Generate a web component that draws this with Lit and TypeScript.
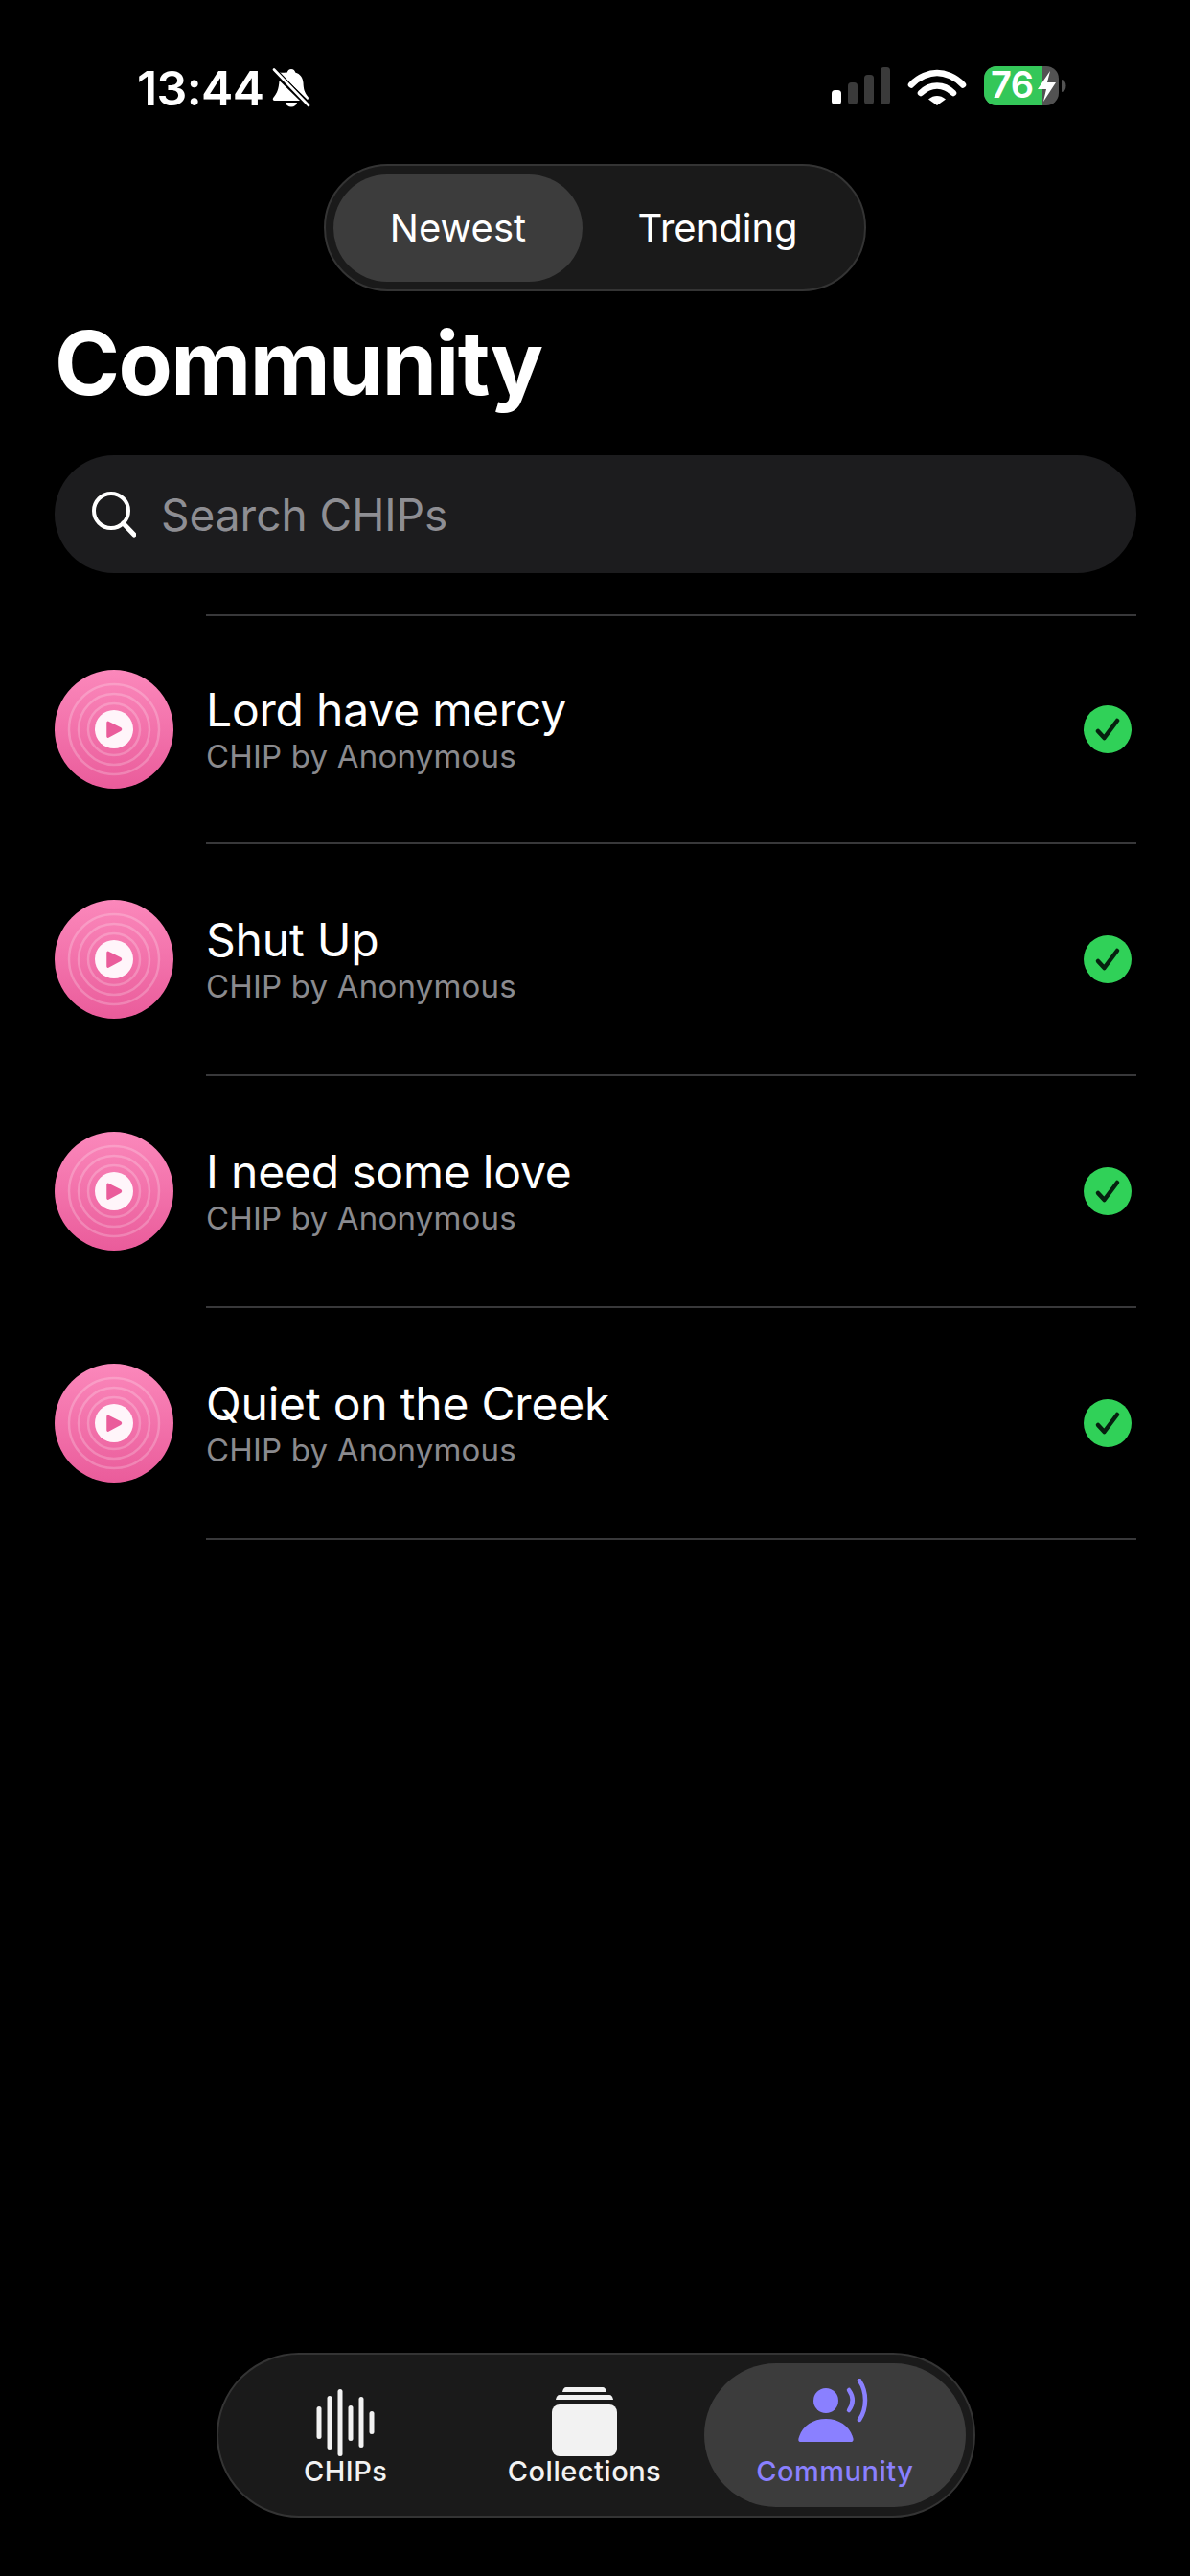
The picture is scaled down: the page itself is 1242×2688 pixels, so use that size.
import { LitElement, html, css, svg } from "lit";
import { customElement } from "lit/decorators.js";

const rows = ["Lord have mercy", "Shut Up", "I need some love", "Quiet on the Creek"];

@customElement("app-root")
export class AppRoot extends LitElement {
  static styles = css`
    :host { display: block; width: 1242px; height: 2688px; background: #000; color: #fff; font-family: Inter, "Noto Sans", sans-serif; overflow: hidden; }
    * { box-sizing: border-box; }
    .page { display: flex; flex-direction: column; height: 2688px; }
    .status { height: 171px; flex: none; display: flex; justify-content: space-between; align-items: flex-start; padding: 62px 85px 0 143px; }
    .status-left { display: flex; align-items: center; gap: 8px; }
    .time { font-size: 50px; line-height: 60px; font-weight: 600; letter-spacing: -0.6px; }
    .status-right { display: flex; align-items: center; padding-top: 7px; }
    .seg { align-self: center; flex: none; width: 566px; height: 133px; border-radius: 67px; background: #1a1a1a; border: 2px solid #343434; display: flex; align-items: center; padding: 0 8px; }
    .seg div { height: 112px; border-radius: 56px; display: flex; align-items: center; justify-content: center; font-size: 40px; }
    .seg .on { width: 260px; background: #3c3c3c; }
    .seg .off { width: 282px; }
    h1 { margin: 20px 0 0 57px; font-size: 92px; line-height: 110px; font-weight: 700; letter-spacing: -1.6px; }
    .search { margin: 41px 56px 0 57px; height: 123px; flex: none; border-radius: 62px; background: #1c1c1e; display: flex; align-items: center; padding-left: 39px; gap: 26px; font-size: 46px; color: #8e8e93; }
    .list { margin: 43px 56px 0 57px; display: flex; flex-direction: column; }
    .top-rule { height: 2px; margin-left: 158px; background: #38383a; }
    .row { height: 242px; display: flex; align-items: center; position: relative; padding-bottom: 2px; }
    .row.first { height: 238px; }
    .row::after { content: ""; position: absolute; left: 158px; right: 0; bottom: 0; height: 2px; background: #38383a; }
    .row .disc { flex: none; width: 124px; height: 124px; }
    .text { margin-left: 34px; flex: 1; display: flex; flex-direction: column; }
    .title { font-size: 48px; line-height: 56px; letter-spacing: -0.2px; }
    .sub { font-size: 33px; line-height: 40px; color: #8a8a8e; letter-spacing: 0.2px; }
    .check { flex: none; margin-right: 5px; width: 50px; height: 50px; }
    .tabs { margin: auto 0 61px 226px; flex: none; width: 792px; height: 172px; border-radius: 86px; background: #1a1a1a; border: 2px solid #343434; display: flex; align-items: center; padding: 0 8px; }
    .tab { display: flex; flex-direction: column; align-items: center; font-size: 29px; font-weight: 500; letter-spacing: 0.5px; height: 150px; border-radius: 75px; color: #f2f2f2; position: relative; }
    .tab svg { display: block; flex: none; }
    .tab span { position: absolute; top: 95px; white-space: nowrap; line-height: 36px; }
    .t1 { width: 250px; }
    .t2 { width: 250px; }
    .t3 { width: 274px; background: #3c3c3c; color: #8a80ff; }
  `;

  disc() {
    return html`<svg class="disc" viewBox="0 0 124 124">
      <defs><linearGradient id="g" x1="0" y1="0" x2="0" y2="1"><stop offset="0" stop-color="#fb88bb"/><stop offset="1" stop-color="#ea5c9b"/></linearGradient></defs>
      <circle cx="62" cy="62" r="62" fill="url(#g)"/>
      <g fill="none" stroke="#fff" stroke-opacity=".22" stroke-width="2.5">
        <circle cx="62" cy="62" r="47"/><circle cx="62" cy="62" r="37"/><circle cx="62" cy="62" r="27"/>
      </g>
      <circle cx="62" cy="62" r="20" fill="#fff5fa"/>
      <path d="M56 54.5 L69 61 Q70 62 69 63 L56 70 Q55 70.5 55 69 V55.5 Q55 54 56 54.5Z" fill="#ea5c9b" stroke="#ea5c9b" stroke-width="1.5" stroke-linejoin="round"/>
    </svg>`;
  }

  render() {
    return html`<div class="page">
      <div class="status">
        <div class="status-left">
          <span class="time">13:44</span>
          <svg width="40" height="42" viewBox="0 0 40 42">
            <path d="M20 1c2.2 0 4 1.6 4.200 3.600 5 1.500 8 5.400 8.300 11 .3 6 .9 9.600 5 14.400 .8 1 .6 2.500-.6 3L6 3.500C9 6 13.500 4 15.800 4.600 16 2.600 17.800 1 20 1Z" fill="#fff"/>
            <path d="M7.500 13 29 34H2.500C1 34 .2 32.200 1.200 31c3.800-4.500 5.800-9 6.300-18Z" fill="#fff"/>
            <path d="M14 36h12c-.6 2.800-3 4.500-6 4.500s-5.400-1.700-6-4.500Z" fill="#fff"/>
            <path d="M2 1.500 38 39" stroke="#000" stroke-width="5"/>
            <path d="M2 1.500 38 39" stroke="#fff" stroke-width="2.600" stroke-linecap="round"/>
          </svg>
        </div>
        <div class="status-right">
          <svg width="290" height="42" viewBox="0 0 290 42">
            <rect x="1" y="25" width="10" height="15" rx="3.500" fill="#fff"/>
            <rect x="18" y="17" width="10" height="23" rx="3.500" fill="#3a3a3a"/>
            <rect x="35" y="9" width="10" height="31" rx="3.500" fill="#3a3a3a"/>
            <rect x="52" y="1" width="10" height="39" rx="3.500" fill="#3a3a3a"/>
            <path d="M84 19.500C92 11 103 7 111 7s19 4 27 12.500" fill="none" stroke="#fff" stroke-width="6.500" stroke-linecap="round"/>
            <path d="M94 28c5-5 11-7.500 17-7.500S123 23 128 28" fill="none" stroke="#fff" stroke-width="6.500" stroke-linecap="round"/>
            <path d="M102 34.500c3-2.500 6-3.600 9-3.600s6 1.100 9 3.600L111 41Z" fill="#fff"/>
            <rect x="160" y="0" width="78" height="41" rx="13" fill="#525252"/>
            <path d="M173 0H221V41H173A13 13 0 0 1 160 28V13A13 13 0 0 1 173 0Z" fill="#34c759"/>
            <path d="M241 14c3 .6 4.500 3 4.500 6.500s-1.500 6-4.500 6.500Z" fill="#525252"/>
            <text x="167" y="33" font-family="Inter, sans-serif" font-weight="600" font-size="38" fill="#fff" letter-spacing="-.5">76</text>
            <path d="M229 5 216 24h9l-3 13 13-20h-9l3-12Z" fill="#fff"/>
          </svg>
        </div>
      </div>

      <div class="seg"><div class="on">Newest</div><div class="off">Trending</div></div>

      <h1>Community</h1>

      <div class="search">
        <svg width="46" height="48" viewBox="0 0 46 48" fill="none" stroke="#fff">
          <circle cx="20" cy="20" r="18" stroke-width="4"/>
          <path d="M32.500 33 44 45" stroke-width="5" stroke-linecap="round"/>
        </svg>
        <span>Search CHIPs</span>
      </div>

      <div class="list">
        <div class="top-rule"></div>
        ${rows.map((t, i) => html`<div class="row ${i === 0 ? "first" : ""}">
          ${this.disc()}
          <div class="text"><div class="title">${t}</div><div class="sub">CHIP by Anonymous</div></div>
          <svg class="check" viewBox="0 0 50 50">
            <circle cx="25" cy="25" r="25" fill="#30d158"/>
            <path d="M15 27l6.500 7L35 16" fill="none" stroke="#06200f" stroke-width="4.500" stroke-linecap="round" stroke-linejoin="round"/>
          </svg>
        </div>`)}
      </div>

      <div class="tabs">
        <div class="tab t1">
          <svg width="62" height="70" viewBox="0 0 62 70" style="margin-top:27px" fill="#f2f2f2">
            ${[[0, 18, 34], [11, 7, 56], [22, 0, 70], [33, 17, 37], [44, 8, 53], [55, 23, 24]].map(
              ([x, y, h]) => svg`<rect x=${x + 0.5} y=${y} width="5" height=${h} rx="2.500"/>`
            )}
          </svg>
          <span>CHIPs</span>
        </div>
        <div class="tab t2">
          <svg width="68" height="72" viewBox="0 0 68 72" style="margin-top:25px" fill="#f2f2f2">
            <path d="M15 0H53Q56 0 57 5H11Q12 0 15 0Z"/>
            <path d="M8 8H60Q63 8 64 13H4Q5 8 8 8Z"/>
            <rect x="0" y="18" width="68" height="54" rx="8"/>
          </svg>
          <span>Collections</span>
        </div>
        <div class="tab t3">
          <svg width="76" height="68" viewBox="0 0 76 68" style="margin-top:16px" fill="#8a80ff">
            <circle cx="29" cy="23" r="13"/>
            <path d="M2 66C0 66 0 63 1 61 4 50 15 42 29 42S54 50 57 61C58 63 58 66 55 66Z"/>
            <path d="M53 12C58 19 58 26 53 33" fill="none" stroke="#8a80ff" stroke-width="4.500" stroke-linecap="round"/>
            <path d="M64 2C72 14 72 31 64 43" fill="none" stroke="#8a80ff" stroke-width="4.500" stroke-linecap="round"/>
          </svg>
          <span>Community</span>
        </div>
      </div>
    </div>`;
  }
}
